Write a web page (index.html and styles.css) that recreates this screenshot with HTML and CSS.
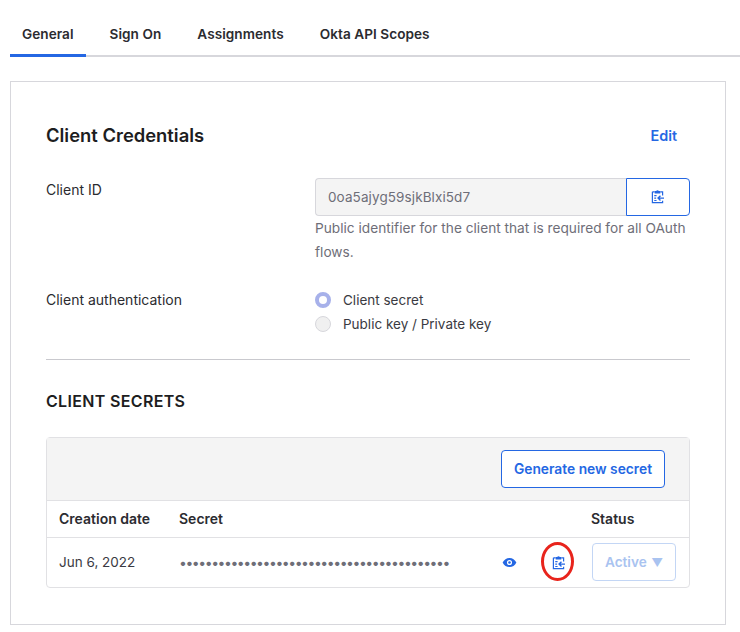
FILE: index.html
```html
<!DOCTYPE html>
<html lang="en">
<head>
<meta charset="utf-8">
<title>Client Credentials</title>
<link rel="stylesheet" href="styles.css">
</head>
<body>
<svg class="defs" width="0" height="0" aria-hidden="true">
  <symbol id="clip" viewBox="0 0 14 16">
    <path d="M1.5 3h2.5M10 3h2.500v4M12.500 12.500v2h-11V3" fill="none" stroke="currentColor" stroke-width="1.300"/>
    <path d="M4 2.200h1.600a1.500 1.500 0 0 1 2.800 0H10v2.600H4z" fill="currentColor"/>
    <path d="M3.500 7h2.500M3.500 9.700h2M3.500 12.300h2.500" stroke="currentColor" stroke-width="1.300"/>
    <path d="M14 9.700H7.800M10.200 7.200 7.600 9.700l2.600 2.500" fill="none" stroke="currentColor" stroke-width="1.500"/>
  </symbol>
</svg>
<nav class="tabs">
  <a class="tab active">General</a>
  <a class="tab">Sign On</a>
  <a class="tab">Assignments</a>
  <a class="tab">Okta API Scopes</a>
</nav>
<main class="card">
  <header class="card-head">
    <h1>Client Credentials</h1>
    <a class="edit">Edit</a>
  </header>
  <div class="field client-id">
    <div class="label">Client ID</div>
    <div class="value">
      <div class="input-group">
        <div class="input">0oa5ajyg59sjkBlxi5d7</div>
        <button class="copy"><svg class="icon"><use href="#clip"/></svg></button>
      </div>
      <p class="help">Public identifier for the client that is required for all OAuth flows.</p>
    </div>
  </div>
  <div class="field auth">
    <div class="label">Client authentication</div>
    <div class="value radios">
      <div class="radio-row"><span class="radio on"></span>Client secret</div>
      <div class="radio-row"><span class="radio"></span>Public key / Private key</div>
    </div>
  </div>
  <hr class="rule">
  <h2>CLIENT SECRETS</h2>
  <section class="table">
    <div class="toolbar"><button class="generate">Generate new secret</button></div>
    <div class="row head">
      <div class="c-date">Creation date</div>
      <div class="c-secret-head">Secret</div>
      <div class="c-status">Status</div>
    </div>
    <div class="row body">
      <div class="c-date">Jun 6, 2022</div>
      <div class="c-secret dots">••••••••••••••••••••••••••••••••••••••••••</div>
      <svg class="eye" viewBox="0 0 16 12"><path fill-rule="evenodd" d="M0.5 6C2 2.800 4.800 1 8 1s6 1.800 7.500 5C14 9.200 11.200 11 8 11S2 9.200.5 6zM8 3.200a2.800 2.800 0 1 0 0 5.600 2.800 2.800 0 0 0 0-5.600z" fill="currentColor"/><circle cx="8" cy="6" r="1.400" fill="currentColor"/></svg>
      <div class="copy-cell">
        <svg class="icon"><use href="#clip"/></svg>
        <span class="annotation"></span>
      </div>
      <div class="c-status"><button class="status">Active <span class="caret">▼</span></button></div>
    </div>
  </section>
</main>
</body>
</html>
```
FILE: styles.css
```css
* { box-sizing: border-box; }
html, body { margin: 0; padding: 0; }
body {
  width: 740px;
  height: 632px;
  overflow: hidden;
  background: #fff;
  color: #1d1d21;
  font-family: Inter, "Liberation Sans", sans-serif;
  font-size: 13.7px;
}
.defs { position: absolute; }
.tabs {
  display: flex;
  height: 57px;
  margin-left: 10px;
  border-bottom: 2px solid #d7d7dc;
}
.tab {
  height: 57px;
  padding: 26px 12px 0;
  margin-right: 12px;
  font-weight: 600;
  font-size: 13.6px;
  letter-spacing: .05px;
  line-height: 16px;
  color: #2b2b30;
}
.tab.active { border-bottom: 3px solid #2467e3; margin-right: 0; }
.tab:nth-child(2) { margin-left: 12px; }
.card {
  width: 716px;
  height: 544px;
  margin: 24px 0 0 10px;
  padding: 0 35px;
  border: 1px solid #d7d7dc;
}
.card-head {
  display: flex;
  justify-content: space-between;
  align-items: center;
  padding: 40px 13px 0 0;
  height: 66px;
}
h1 { margin: 0; font-size: 18.4px; line-height: 24px; font-weight: 600; color: #1d1d21; }
.edit { font-weight: 600; font-size: 14.4px; color: #2467e3; }
.field { display: flex; }
.label { width: 269px; color: #2b2b30; line-height: 18px; font-size: 14px; }
.value { width: 375px; }
.client-id { margin-top: 30px; }
.client-id .label { padding-top: 3px; }
.input-group { display: flex; height: 38px; }
.input {
  width: 312px;
  background: #f4f4f4;
  border: 1px solid #d7d7dc;
  border-right: 0;
  border-radius: 4px 0 0 4px;
  padding-left: 12px;
  line-height: 36px;
  font-size: 13.5px;
  color: #6e6e78;
  letter-spacing: .1px;
}
.copy {
  width: 64px;
  padding: 0;
  background: #fff;
  border: 1px solid #2467e3;
  border-radius: 0 4px 4px 0;
  color: #2467e3;
  display: flex;
  align-items: center;
  justify-content: center;
}
.copy .icon { margin-left: -2px; margin-top: -2px; }
.icon { width: 13px; height: 15px; color: #2467e3; display: block; }
.help { margin: 0; line-height: 24px; color: #6e6e78; }
.auth { margin-top: 24px; height: 71px; }
.auth .label { padding-top: 3px; }
.radio-row { display: flex; align-items: center; height: 24px; color: #3a3a42; font-size: 13.5px; }
.radio {
  width: 16px;
  height: 16px;
  border-radius: 50%;
  border: 1px solid #d7d7dc;
  background: #f0f0f0;
  margin-right: 12px;
}
.radio.on { background: #fff; border: 4.5px solid #a7b1ea; }
.rule { margin: 0; border: 0; border-top: 1px solid #c9c9ce; width: 644px; }
h2 { margin: 31px 0 0; font-size: 16px; letter-spacing: .33px; line-height: 20px; font-weight: 600; color: #1d1d21; }
.table {
  width: 644px;
  margin-top: 26px;
  border: 1px solid #e1e1e4;
  border-radius: 4px;
}
.toolbar {
  height: 63px;
  background: #f4f4f4;
  border-bottom: 1px solid #e1e1e4;
  display: flex;
  justify-content: flex-end;
  align-items: center;
  padding: 0 24px 0 0;
}
.generate {
  height: 38px;
  width: 164px;
  padding: 0;
  background: #fff;
  border: 1px solid #2467e3;
  border-radius: 4px;
  color: #2467e3;
  font: 600 13.8px Inter, "Liberation Sans", sans-serif;
}
.row { display: flex; align-items: center; padding-left: 12px; padding-bottom: 1px; }
.row.head { height: 37px; border-bottom: 1px solid #e1e1e4; font-weight: 600; font-size: 14px; color: #2b2b30; }
.row.body { height: 49px; color: #3a3a42; font-size: 13.5px; }
.c-date { width: 120px; }
.c-secret-head { width: 412px; }
.c-secret { width: 323px; }
.dots { font-size: 14px; color: #6e6e78; letter-spacing: -1.45px; overflow: hidden; white-space: nowrap; }
.eye { width: 15px; height: 11px; color: #2467e3; flex: none; }
.copy-cell { position: relative; margin-left: 35px; width: 40px; }
.annotation {
  position: absolute;
  left: -11px;
  top: -13px;
  width: 33px;
  height: 39px;
  border: 3.5px solid #e8241c;
  border-radius: 50%;
}
.status {
  width: 84px;
  height: 38px;
  padding: 0;
  background: #fff;
  border: 1px solid #c3d6f5;
  border-radius: 4px;
  color: #a9c3f0;
  font: 600 13.6px Inter, "Liberation Sans", sans-serif;
}
.caret { font-size: 11.5px; margin-left: 1px; }
.c-status { flex: none; }
```
